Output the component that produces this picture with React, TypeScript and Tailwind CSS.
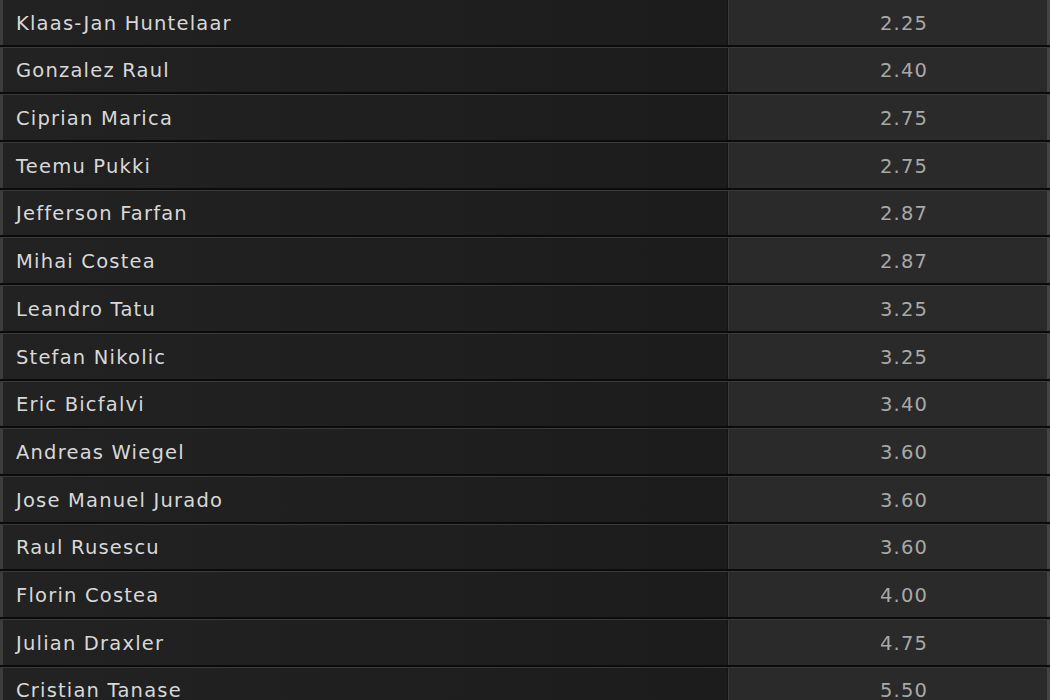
import React from "react";

const players = [
  { name: "Klaas-Jan Huntelaar", odds: "2.25" },
  { name: "Gonzalez Raul", odds: "2.40" },
  { name: "Ciprian Marica", odds: "2.75" },
  { name: "Teemu Pukki", odds: "2.75" },
  { name: "Jefferson Farfan", odds: "2.87" },
  { name: "Mihai Costea", odds: "2.87" },
  { name: "Leandro Tatu", odds: "3.25" },
  { name: "Stefan Nikolic", odds: "3.25" },
  { name: "Eric Bicfalvi", odds: "3.40" },
  { name: "Andreas Wiegel", odds: "3.60" },
  { name: "Jose Manuel Jurado", odds: "3.60" },
  { name: "Raul Rusescu", odds: "3.60" },
  { name: "Florin Costea", odds: "4.00" },
  { name: "Julian Draxler", odds: "4.75" },
  { name: "Cristian Tanase", odds: "5.50" },
];

export default function App() {
  return (
    <div
      className="w-[1050px] h-[700px] overflow-hidden bg-[#0d0d0d]"
      style={{ fontFamily: '"DejaVu Sans", Verdana, sans-serif' }}
    >
      <div className="flex flex-col">
        {players.map((p) => (
          <div
            key={p.name}
            className="flex h-[47.7px] border-b-2 border-[#0b0b0b] border-t border-t-[#3a3a3a] first:border-t-0 first:h-[46.7px]"
          >
            <div className="flex-1 flex items-center pl-[13px] pt-[2px] border-l-[3px] border-l-[#3c3c3c] bg-gradient-to-r from-[#222] to-[#1c1c1c] border-r border-r-[#141414]">
              <span className="text-[19.5px] tracking-[1.2px] text-[#d8d8d8]">
                {p.name}
              </span>
            </div>
            <div className="w-[322px] flex items-center justify-center pl-[32px] pt-[2px] bg-[#2a2a2a] border-l border-l-[#3a3a3a] border-r-[3px] border-r-[#444]">
              <span className="text-[19.5px] tracking-[1.2px] text-[#a8a8a8]">
                {p.odds}
              </span>
            </div>
          </div>
        ))}
      </div>
    </div>
  );
}
